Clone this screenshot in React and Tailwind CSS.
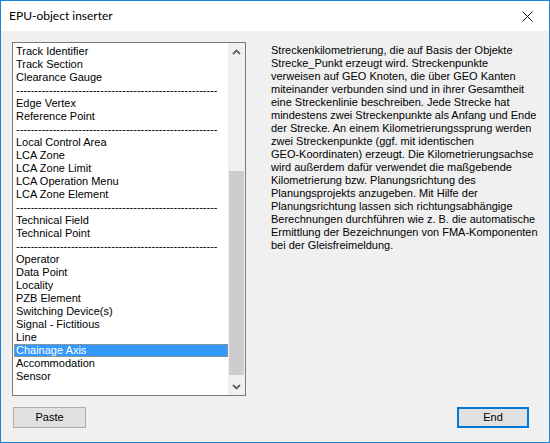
import React from 'react'

const dashes = '-'.repeat(55)

const items = [
  'Track Identifier',
  'Track Section',
  'Clearance Gauge',
  dashes,
  'Edge Vertex',
  'Reference Point',
  dashes,
  'Local Control Area',
  'LCA Zone',
  'LCA Zone Limit',
  'LCA Operation Menu',
  'LCA Zone Element',
  dashes,
  'Technical Field',
  'Technical Point',
  dashes,
  'Operator',
  'Data Point',
  'Locality',
  'PZB Element',
  'Switching Device(s)',
  'Signal - Fictitious',
  'Line',
  'Chainage Axis',
  'Accommodation',
  'Sensor',
]

const lines = [
  'Streckenkilometrierung, die auf Basis der Objekte',
  'Strecke_Punkt erzeugt wird. Streckenpunkte',
  'verweisen auf GEO Knoten, die über GEO Kanten',
  'miteinander verbunden sind und in ihrer Gesamtheit',
  'eine Streckenlinie beschreiben. Jede Strecke hat',
  'mindestens zwei Streckenpunkte als Anfang und Ende',
  'der Strecke. An einem Kilometrierungssprung werden',
  'zwei Streckenpunkte (ggf. mit identischen',
  'GEO-Koordinaten) erzeugt. Die Kilometrierungsachse',
  'wird außerdem dafür verwendet die maßgebende',
  'Kilometrierung bzw. Planungsrichtung des',
  'Planungsprojekts anzugeben. Mit Hilfe der',
  'Planungsrichtung lassen sich richtungsabhängige',
  'Berechnungen durchführen wie z. B. die automatische',
  'Ermittlung der Bezeichnungen von FMA-Komponenten',
  'bei der Gleisfreimeldung.',
]

const Chevron = ({ up }) => (
  <svg width="9" height="6" viewBox="0 0 9 6">
    <path
      d={up ? 'M1 5 L4.5 1.5 L8 5' : 'M1 1 L4.5 4.5 L8 1'}
      fill="none"
      stroke="#606060"
      strokeWidth="1.8"
    />
  </svg>
)

const App = () => {
  return (
    <div className="w-[550px] h-[443px] border border-[#1883d7] flex flex-col font-['Liberation_Sans',Arial,sans-serif] text-[11px] text-black">

      {/* Title bar */}
      <div className="h-[30px] bg-white flex items-center justify-between pl-[8px] pr-[16px]">
        <span className="text-[12px] font-['Lato',sans-serif]">EPU-object inserter</span>
        <svg width="11" height="11" viewBox="0 0 11 11">
          <path d="M0.5 0.5 L10.5 10.5 M10.5 0.5 L0.5 10.5" stroke="#111" strokeWidth="1" />
        </svg>
      </div>

      {/* Body */}
      <div className="flex-1 bg-[#f0f0f0] flex flex-col pt-[11px] pl-[11px]">
        <div className="flex">

          {/* List box */}
          <div className="w-[234px] h-[354px] border border-[#7a7a7a] bg-white flex">
            <div className="flex-1 pt-[2px] pl-[1px]">
              {items.map((item, i) =>
                item === 'Chainage Axis' ? (
                  <div
                    key={i}
                    className="h-[13px] leading-[13px] pl-[1px] bg-[#3399ff] text-white border border-dotted border-[#d98c3c]"
                  >
                    <span className="relative -top-[1px]">{item}</span>
                  </div>
                ) : (
                  <div key={i} className="h-[13px] leading-[13px] pl-[2px] whitespace-nowrap overflow-hidden">
                    {item}
                  </div>
                )
              )}
            </div>

            {/* Scroll bar */}
            <div className="w-[17px] bg-[#f0f0f0] flex flex-col">
              <div className="h-[17px] flex items-center justify-center">
                <Chevron up />
              </div>
              <div className="flex-1 px-[1px]">
                <div className="mt-[111px] h-[204px] bg-[#cdcdcd]" />
              </div>
              <div className="h-[17px] flex items-center justify-center">
                <Chevron />
              </div>
            </div>
          </div>

          {/* Description */}
          <div className="ml-[25px] pt-[2px] leading-[13px]">
            {lines.map((l, i) => (
              <div key={i} className="whitespace-nowrap">{l}</div>
            ))}
          </div>
        </div>

        {/* Buttons */}
        <div className="flex justify-between mt-[11px] pr-[20px]">
          <button className="ml-[1px] w-[73px] h-[21px] border border-[#adadad] bg-[#e1e1e1] text-[11px]">
            Paste
          </button>
          <button className="w-[72px] h-[21px] border-2 border-[#0078d7] bg-[#e1e1e1] text-[11px]">
            End
          </button>
        </div>
      </div>
    </div>
  )
}

export default App
